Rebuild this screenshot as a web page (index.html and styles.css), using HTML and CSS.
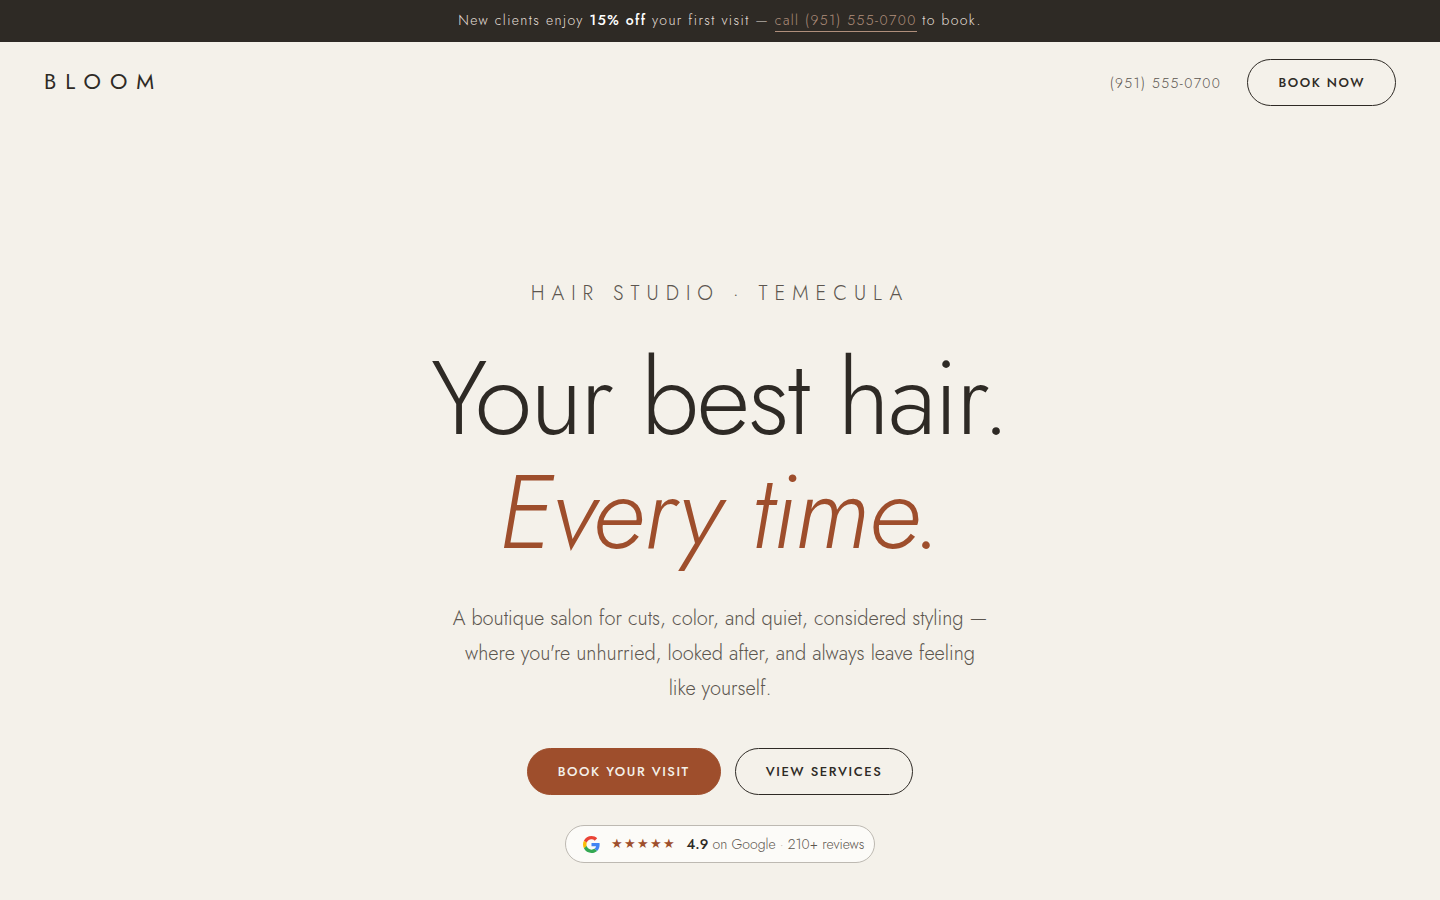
FILE: index.html
```html
<!DOCTYPE html>
<html lang="en">
<head>
    <meta charset="UTF-8">
    <meta name="viewport" content="width=device-width, initial-scale=1.0">
    <title>Bloom Hair Studio</title>
    <link rel="stylesheet" href="styles.css">
</head>
<body>
    <div class="promo">
        <p>New clients enjoy <strong>15% off</strong> your first visit — <a href="tel:+19515550700">call (951) 555-0700</a> to book.</p>
    </div>

    <header class="site-header">
        <a class="logo" href="#">BLOOM</a>
        <nav class="header-actions">
            <a class="phone" href="tel:+19515550700">(951) 555-0700</a>
            <a class="btn btn-outline" href="#book">BOOK NOW</a>
        </nav>
    </header>

    <main class="hero">
        <p class="eyebrow">HAIR STUDIO · TEMECULA</p>
        <h1>Your best hair.<br><em>Every time.</em></h1>
        <p class="lead">A boutique salon for cuts, color, and quiet, considered styling — where you're unhurried, looked after, and always leave feeling like yourself.</p>
        <div class="hero-buttons">
            <a class="btn btn-primary" href="#book">BOOK YOUR VISIT</a>
            <a class="btn btn-outline" href="#services">VIEW SERVICES</a>
        </div>
        <a class="rating" href="#reviews">
            <svg class="google" viewBox="0 0 48 48" aria-hidden="true">
                <path fill="#EA4335" d="M24 9.5c3.54 0 6.71 1.22 9.21 3.6l6.85-6.85C35.9 2.38 30.47 0 24 0 14.62 0 6.51 5.38 2.56 13.22l7.98 6.19C12.43 13.72 17.74 9.5 24 9.5z"/>
                <path fill="#4285F4" d="M46.98 24.55c0-1.57-.15-3.09-.38-4.55H24v9.02h12.94c-.58 2.96-2.26 5.48-4.78 7.18l7.73 6c4.51-4.18 7.09-10.36 7.09-17.65z"/>
                <path fill="#FBBC05" d="M10.53 28.59c-.48-1.45-.76-2.99-.76-4.59s.27-3.14.76-4.59l-7.98-6.19C.92 16.46 0 20.12 0 24c0 3.88.92 7.54 2.56 10.78l7.97-6.19z"/>
                <path fill="#34A853" d="M24 48c6.48 0 11.93-2.13 15.89-5.81l-7.73-6c-2.15 1.45-4.92 2.3-8.16 2.3-6.26 0-11.57-4.22-13.47-9.91l-7.98 6.19C6.51 42.62 14.62 48 24 48z"/>
            </svg>
            <span class="stars">★★★★★</span>
            <span class="score"><strong>4.9</strong> on Google <i>·</i> 210+ reviews</span>
        </a>
    </main>
</body>
</html>
```

FILE: styles.css
```css
:root {
    --cream: #f4f1ea;
    --ink: #2e2a25;
    --muted: #5c564f;
    --rust: #9e4e2c;
    --tan: #b08f7c;
}

* {
    box-sizing: border-box;
}

body {
    margin: 0;
    background: var(--cream);
    color: var(--ink);
    font-family: Jost, Lato, sans-serif;
    font-weight: 300;
}

a {
    color: inherit;
    text-decoration: none;
}

h1, p {
    margin: 0;
}

.promo {
    padding: 9px 20px 11px;
    background: var(--ink);
    color: #e4dfd7;
    font-size: 14px;
    line-height: 22px;
    letter-spacing: 0.1em;
    text-align: center;
}

.promo strong {
    color: #fff;
    font-weight: 500;
}

.promo a {
    padding-bottom: 1px;
    border-bottom: 1px solid var(--tan);
    color: var(--tan);
}

.site-header {
    display: flex;
    align-items: center;
    justify-content: space-between;
    padding: 17px 44px;
}

.logo {
    padding-bottom: 4px;
    font-size: 22px;
    font-weight: 400;
    letter-spacing: 9px;
}

.header-actions {
    display: flex;
    align-items: center;
    gap: 26px;
}

.phone {
    color: var(--muted);
    font-size: 14px;
    line-height: 22px;
    letter-spacing: 0.1em;
}

.btn {
    padding: 12px 30px;
    border: 1px solid var(--ink);
    border-radius: 24px;
    font-size: 13px;
    font-weight: 500;
    line-height: 21px;
    letter-spacing: 0.12em;
}

.btn-primary {
    border-color: var(--rust);
    background: var(--rust);
    color: var(--cream);
}

.hero {
    display: flex;
    flex-direction: column;
    align-items: center;
    padding: 153px 24px 36px;
    text-align: center;
}

.eyebrow {
    margin-bottom: 29px;
    color: var(--muted);
    font-size: 20px;
    line-height: 36px;
    letter-spacing: 7px;
}

h1 {
    margin-bottom: 32px;
    font-size: 104px;
    font-weight: 300;
    line-height: 114px;
    letter-spacing: -0.02em;
}

h1 em {
    color: var(--rust);
    letter-spacing: -0.01em;
}

.lead {
    max-width: 540px;
    margin-bottom: 42px;
    color: var(--muted);
    font-size: 20px;
    line-height: 35px;
}

.hero-buttons {
    display: flex;
    flex-wrap: wrap;
    justify-content: center;
    gap: 14px;
    margin-bottom: 30px;
}

.rating {
    display: flex;
    align-items: center;
    gap: 11px;
    padding: 7px 10px 7px 17px;
    border: 1px solid #bdb9b2;
    border-radius: 19px;
    background: #fcfbf8;
    color: var(--muted);
    font-size: 14px;
    line-height: 22px;
}

.google {
    width: 17px;
    height: 17px;
}

.stars {
    color: var(--rust);
    font-family: "DejaVu Sans", sans-serif;
    font-size: 13px;
    letter-spacing: 1px;
}

.score strong {
    color: var(--ink);
    font-weight: 500;
}

.score i {
    color: #bdb9b2;
    font-style: normal;
}
```
